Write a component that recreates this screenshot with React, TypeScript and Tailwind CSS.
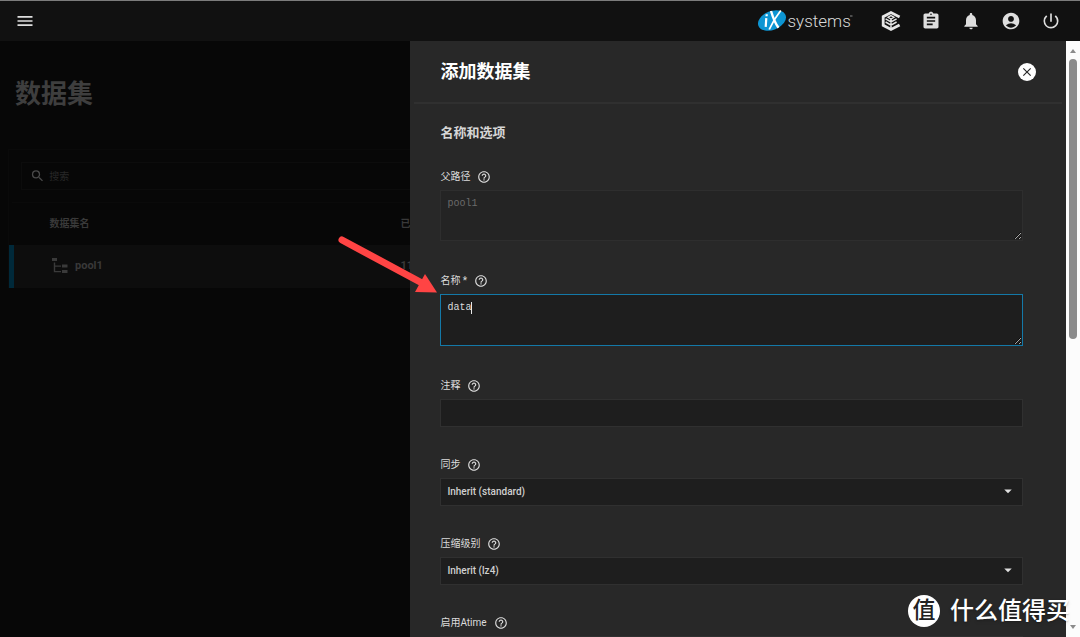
import React from 'react';
import {
  MdAccountCircle,
  MdArrowDropDown,
  MdAssignment,
  MdClose,
  MdHelpOutline,
  MdMenu,
  MdNotifications,
  MdPowerSettingsNew,
  MdSearch,
} from 'react-icons/md';

const SANS = "font-['Roboto','Noto_Sans_CJK_SC',sans-serif]";
const BOX = 'block w-full rounded-none border border-[#303030] bg-[#1e1e1e] px-1.5 text-[10px] font-medium text-[#d0d0d0] outline-none';
const AREA = "mb-0.5 block w-full border px-1.5 py-[5px] font-['Liberation_Mono',monospace] text-[10px] leading-4";

function IxLogo() {
  return (
    <svg viewBox="0 0 96 24" className="h-6 w-24" role="img" aria-label="iXsystems">
      <ellipse cx="14" cy="11.5" rx="14.6" ry="9.4" transform="rotate(-22 14 11.5)" fill="#0d95d3" />
      <path d="M8.300 9.200 7.700 17.800M8.700 5.200 8.600 7.200" stroke="#fff" strokeWidth="2.200" fill="none" />
      <path d="M13 2c1.500 5 4 12 7.500 16.800" stroke="#fff" strokeWidth="2.400" fill="none" />
      <path d="M22.800 1.500C18 7.500 14.500 13 11.200 20.500" stroke="#fff" strokeWidth="1.800" fill="none" />
      <text x="29.500" y="18" fontSize="17" fill="#dadada" fontFamily="Roboto,sans-serif" fontWeight="300">
        systems
      </text>
      <path d="M92 7h2.500" stroke="#8a8a8a" strokeWidth="1" />
    </svg>
  );
}

function TrueCommandIcon() {
  return (
    <svg viewBox="0 0 20 20" className="size-5" fill="none" stroke="#e6e6e6" aria-hidden="true">
      <path d="M18.600 6 10 1.600 2.200 5.700v8.600l7.800 4.100 8.600-4.500" strokeWidth="2.800" />
      <path d="M10 4.600 13 6.300 10 8 7 6.300Z" strokeWidth="1.300" />
      <path d="M4.600 7.800 10 10.900 15.600 7.800M4.600 11 10 14.100 15.600 11M10 8v9" strokeWidth="1.500" />
    </svg>
  );
}

function PoolIcon() {
  return (
    <svg viewBox="0 0 16 16" className="size-4" fill="#3a3a3a" aria-hidden="true">
      <path d="M0 0h5v3H0zM10 6.500h5.500v3H10zM10 12h5.500v3H10zM1.800 4.500h1.400v3H9v1.300H3.200v4.200H9v1.300H1.800z" />
    </svg>
  );
}

type FieldProps = {
  id: string;
  label: string;
  required?: boolean;
  children: React.ReactNode;
};

function Field({ id, label, required, children }: FieldProps) {
  return (
    <div>
      <div className="mb-[5px] flex h-4 items-center gap-[7px] text-[10px] leading-4 text-[#dcdcdc]">
        <label htmlFor={id}>
          {label}
          {required && <span> *</span>}
        </label>
        <button type="button" aria-label={`${label} 帮助`}>
          <MdHelpOutline className="size-3.5" />
        </button>
      </div>
      {children}
    </div>
  );
}

function SelectField({ id, label, value }: { id: string; label: string; value: string }) {
  return (
    <Field id={id} label={label}>
      <div className="relative">
        <select id={id} className={`${BOX} h-7 appearance-none pb-0.5`} defaultValue={value}>
          <option>{value}</option>
        </select>
        <MdArrowDropDown className="pointer-events-none absolute top-1 right-1.5 size-4.5 text-[#e0e0e0]" />
      </div>
    </Field>
  );
}

const actions = [
  { label: 'TrueCommand', icon: <TrueCommandIcon /> },
  { label: '任务', icon: <MdAssignment className="size-5" /> },
  { label: '警报', icon: <MdNotifications className="size-5" /> },
  { label: '用户', icon: <MdAccountCircle className="size-5" /> },
  { label: '电源', icon: <MdPowerSettingsNew className="size-5" /> },
];

function TopBar() {
  return (
    <header className="flex h-[41px] shrink-0 items-center border-t border-[#7c7c7c] bg-[#111111] px-[15px] text-[#dedede]">
      <button type="button" aria-label="菜单">
        <MdMenu className="size-5" />
      </button>
      <div className="ml-auto flex items-center gap-[27px]">
        <IxLogo />
        <div className="flex gap-5 pr-1">
          {actions.map((action) => (
            <button key={action.label} type="button" aria-label={action.label}>
              {action.icon}
            </button>
          ))}
        </div>
      </div>
    </header>
  );
}

function DatasetList() {
  return (
    <main className="w-[38%] overflow-hidden bg-[#070707] pt-[33px] whitespace-nowrap text-[#393939]">
      <h1 className="px-[15px] text-[26px] leading-10 font-bold text-[#3e3e3e]">数据集</h1>
      <div className="mt-[35px] ml-2 border-t border-l border-[#0a0a0a]">
        <div className="py-3 pl-3">
          <div className="flex h-7 items-center gap-1 border border-r-0 border-[#0c0c0c] pl-2">
            <MdSearch className="size-4 text-[#4a4a4a]" />
            <input
              aria-label="搜索"
              placeholder="搜索"
              className="w-full bg-transparent text-[10px] outline-none placeholder:text-[#282828]"
            />
          </div>
        </div>
        <table className="w-full table-fixed text-left text-[10px]">
          <thead>
            <tr className="h-[42px] border-t border-[#0a0a0a]">
              <th className="pl-[38px] font-bold">数据集名</th>
              <th className="w-2.5 overflow-hidden p-0 font-bold">已用</th>
            </tr>
          </thead>
          <tbody>
            <tr className="h-[43px] bg-[#0d0d0d] text-[11px] font-bold">
              <td className="border-l-5 border-[#00293a] pl-[38px]">
                <div className="flex items-center gap-[7px]">
                  <PoolIcon />
                  pool1
                </div>
              </td>
              <td className="overflow-hidden p-0">11.2</td>
            </tr>
          </tbody>
        </table>
      </div>
    </main>
  );
}

function AddDatasetPanel() {
  return (
    <section className="flex min-w-0 flex-1 flex-col overflow-hidden bg-[#282828]">
      <div className="mx-1 flex h-[63px] shrink-0 items-center justify-between border-b-2 border-[#303030] px-[26px] pt-px">
        <h2 className="text-[18px] leading-6 font-bold text-white">添加数据集</h2>
        <button type="button" aria-label="关闭" className="flex size-4.5 items-center justify-center rounded-full bg-white text-[#282828]">
          <MdClose className="size-3.5" />
        </button>
      </div>
      <form className="pt-[19px] pr-[43px] pl-[30px]">
        <fieldset>
          <legend className="mb-[26px] text-[13px] leading-5 font-bold text-[#d6d6d6]">名称和选项</legend>
          <div className="flex flex-col gap-[30px]">
            <Field id="parent" label="父路径">
              <textarea
                id="parent"
                disabled
                defaultValue="pool1"
                className={`${AREA} h-[51px] border-[#2e2e2e] bg-[#242424] text-[#6b6b6b]`}
              />
            </Field>
            <Field id="name" label="名称" required>
              <div className="relative">
                <textarea
                  id="name"
                  defaultValue="data"
                  className={`${AREA} h-[52px] border-[#1479a8] bg-[#1e1e1e] text-[#dcdcdc] outline-none`}
                />
                <span className="pointer-events-none absolute top-2 left-[31px] h-3 w-px bg-[#e8e8e8]" />
              </div>
            </Field>
            <Field id="comments" label="注释">
              <input id="comments" className={`${BOX} h-7`} />
            </Field>
            <SelectField id="sync" label="同步" value="Inherit (standard)" />
            <SelectField id="compression" label="压缩级别" value="Inherit (lz4)" />
            <SelectField id="atime" label="启用Atime" value="Inherit (off)" />
          </div>
        </fieldset>
      </form>
    </section>
  );
}

function ScrollTrack() {
  return (
    <div className="flex w-3.5 shrink-0 flex-col items-center bg-[#fcfcfc] py-2" aria-hidden="true">
      <div className="border-x-3 border-b-4 border-x-transparent border-b-[#8b8b8b]" />
      <div className="mt-1.5 h-[280px] w-2 rounded-full bg-[#8b8b8b]" />
      <div className="mt-auto border-x-3 border-t-4 border-x-transparent border-t-[#8b8b8b]" />
    </div>
  );
}

export default function App() {
  return (
    <div className={`relative flex h-screen flex-col overflow-hidden bg-[#070707] ${SANS}`}>
      <TopBar />
      <div className="flex min-h-0 flex-1">
        <DatasetList />
        <AddDatasetPanel />
        <ScrollTrack />
      </div>

      {/* Arrow pointing at the name field */}
      <svg viewBox="0 0 100 60" className="pointer-events-none absolute top-[235px] left-[338px] h-[60px] w-[100px]" aria-hidden="true">
        <path d="M4 5 84 48" stroke="#ff4444" strokeWidth="7" strokeLinecap="round" />
        <path d="M99 57.500 77 57 87 39Z" fill="#ff4444" />
      </svg>

      {/* Watermark */}
      <div className="pointer-events-none absolute right-2.5 bottom-2.5 flex items-center gap-2.5 text-white">
        <span className="flex size-8 items-center justify-center rounded-full bg-white text-[23px] leading-8 font-medium text-[#222222]">值</span>
        <span className="text-[24px] leading-8 font-medium text-shadow-md">什么值得买</span>
      </div>
    </div>
  );
}
